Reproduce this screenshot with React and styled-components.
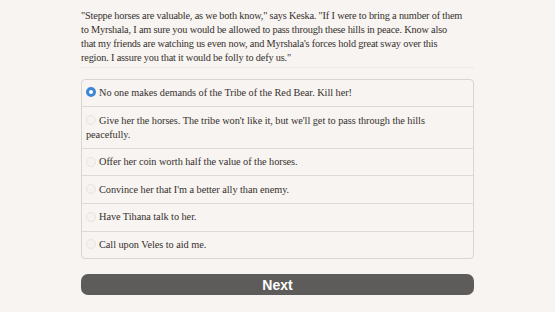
import React, { useState } from "react";
import styled, { createGlobalStyle } from "styled-components";

const GlobalStyle = createGlobalStyle`
  html, body {
    margin: 0;
    padding: 0;
    background: #f7f4f1;
  }
`;

const passageLines = [
  "\"Steppe horses are valuable, as we both know,\" says Keska. \"If I were to bring a number of them",
  "to Myrshala, I am sure you would be allowed to pass through these hills in peace. Know also",
  "that my friends are watching us even now, and Myrshala's forces hold great sway over this",
  "region. I assure you that it would be folly to defy us.\"",
];

const choices = [
  "No one makes demands of the Tribe of the Red Bear. Kill her!",
  "Give her the horses. The tribe won't like it, but we'll get to pass through the hills peacefully.",
  "Offer her coin worth half the value of the horses.",
  "Convince her that I'm a better ally than enemy.",
  "Have Tihana talk to her.",
  "Call upon Veles to aid me.",
];

const App = () => {
  const [selected, setSelected] = useState(0);

  return (
    <>
      <GlobalStyle />
      <Page>
        <Passage>
          {passageLines.map((line, i) => (
            <React.Fragment key={i}>
              {line}
              {i < passageLines.length - 1 && <br />}
            </React.Fragment>
          ))}
        </Passage>
        <Rule />
        <ChoiceList>
          {choices.map((text, i) => (
            <Choice key={i} onClick={() => setSelected(i)}>
              <Radio $checked={selected === i} />
              {text}
            </Choice>
          ))}
        </ChoiceList>
        <NextButton>Next</NextButton>
      </Page>
    </>
  );
};

export default App;

const Page = styled.div`
  width: 393px;
  margin: 0 auto;
  padding-top: 9px;
  font-family: "Liberation Serif", "Times New Roman", serif;
  color: #36302d;
`;

const Passage = styled.p`
  margin: 0;
  font-size: 10.3px;
  letter-spacing: -0.18px;
  line-height: 13.9px;
`;

const Rule = styled.div`
  height: 1px;
  background: #ece8e4;
  margin: 2px 0 11px;
`;

const ChoiceList = styled.div`
  border: 1px solid #d9d5d1;
  border-radius: 4px;
  overflow: hidden;
`;

const Choice = styled.div`
  padding: 6.3px 6px 6.3px 4px;
  font-size: 10.3px;
  letter-spacing: -0.05px;
  line-height: 14px;
  cursor: pointer;
  & + & {
    border-top: 1px solid #dcd8d4;
  }
`;

const Radio = styled.span`
  display: inline-block;
  box-sizing: border-box;
  width: 10px;
  height: 10px;
  margin-right: 3px;
  vertical-align: -1.5px;
  border-radius: 50%;
  background: ${(p) => (p.$checked ? "#ffffff" : "#f5f3f1")};
  border: ${(p) =>
    p.$checked ? "3px solid #3d87db" : "1px solid #e8e4e0"};
`;

const NextButton = styled.button`
  display: block;
  width: 100%;
  height: 21px;
  margin-top: 15px;
  padding: 0;
  border: none;
  border-radius: 7px;
  background: #5e5c5a;
  color: #ffffff;
  font-family: "Liberation Sans", Arial, sans-serif;
  font-weight: 700;
  font-size: 14px;
  cursor: pointer;
`;
